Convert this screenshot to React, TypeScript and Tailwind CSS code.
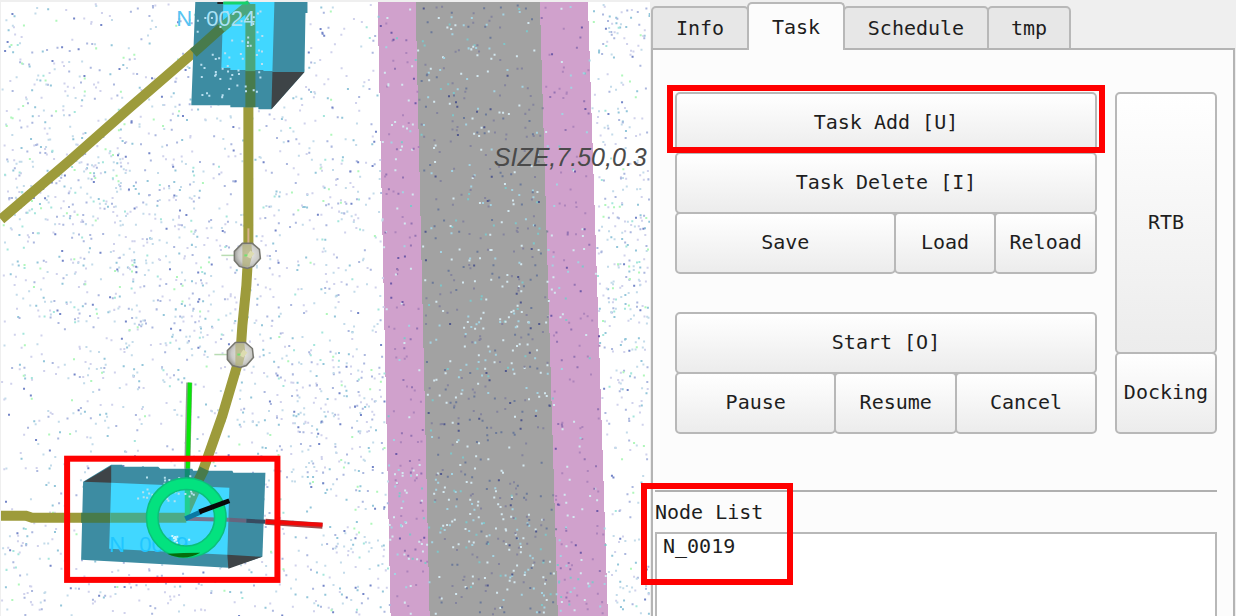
import { useState, type ReactNode } from "react";

/* ---------- point cloud ---------- */

function makeRandom(seed: number) {
  let s = seed;
  return () => {
    s = (s + 0x6d2b79f5) | 0;
    let t = Math.imul(s ^ (s >>> 15), 1 | s);
    t = (t + Math.imul(t ^ (t >>> 7), 61 | t)) ^ t;
    return ((t ^ (t >>> 14)) >>> 0) / 4294967296;
  };
}

type Layer = { color: string; share: number };

const FLOOR: Layer[] = [
  { color: "#d0d2ec", share: 0.28 },
  { color: "#c3dbea", share: 0.25 },
  { color: "#acb8df", share: 0.18 },
  { color: "#93c6da", share: 0.13 },
  { color: "#7486c8", share: 0.06 },
  { color: "#a5e6dc", share: 0.05 },
  { color: "#b0f7bb", share: 0.05 },
];
const LANE_DARK: Layer[] = [
  { color: "#84849d", share: 0.5 },
  { color: "#6c7a99", share: 0.35 },
  { color: "#50588c", share: 0.15 },
];
const SHOULDER_DARK: Layer[] = [
  { color: "#ad84bb", share: 0.5 },
  { color: "#9473b2", share: 0.35 },
  { color: "#6f5aa8", share: 0.15 },
];
const LANE_LIGHT: Layer[] = [
  { color: "#d3e8f0", share: 0.5 },
  { color: "#a3d3e2", share: 0.3 },
  { color: "#7fc6c9", share: 0.2 },
];

function lane(x: number, y: number) {
  const t = y / 616;
  if (x < 377 + 13 * t || x > 587 + 20 * t) return "floor";
  if (x < 415 + 14 * t || x > 539 + 18 * t) return "shoulder";
  return "lane";
}

const hits = (x: number, y: number, spots: number[][]) =>
  spots.reduce((sum, [cx, cy, r, w]) => {
    const d = ((x - cx) ** 2 + (y - cy) ** 2) / (r * r);
    return sum + w * Math.exp(-d);
  }, 0);

const FLOOR_SPOTS = [
  [30, 150, 70, 0.6],
  [150, 250, 90, 0.6],
  [90, 170, 60, 0.3],
  [170, 330, 50, 0.4],
  [320, 420, 55, 0.8],
  [350, 200, 50, 0.4],
  [370, 560, 40, 0.5],
  [640, 230, 60, 1],
  [630, 20, 40, 0.6],
  [630, 340, 60, 0.5],
  [640, 600, 40, 0.9],
  [150, 600, 60, 0.3],
];
const LIGHT_SPOTS = [
  [460, 50, 60, 0.6],
  [510, 220, 60, 0.7],
  [510, 330, 50, 0.8],
  [400, 130, 30, 0.6],
  [400, 510, 60, 1],
  [490, 530, 50, 0.9],
  [560, 590, 50, 1],
  [440, 360, 50, 0.4],
];

function buildCloud() {
  const rand = makeRandom(19);
  const paths = new Map<string, string>();
  const put = (x: number, y: number, set: Layer[]) => {
    let pick = rand();
    let color = set[0].color;
    for (const layer of set) {
      color = layer.color;
      pick -= layer.share;
      if (pick < 0) break;
    }
    const d = `M${x.toFixed(1)} ${y.toFixed(1)}h2v2h-2z`;
    paths.set(color, (paths.get(color) ?? "") + d);
  };
  for (let i = 0; i < 13500; i++) {
    const x = 1 + rand() * 647;
    const y = 3 + rand() * 611;
    const zone = lane(x, y);
    const roll = rand();
    if (zone === "floor") {
      if (roll < 0.21 + 0.48 * hits(x, y, FLOOR_SPOTS)) put(x, y, FLOOR);
    } else if (roll < 0.12) {
      put(x, y, zone === "lane" ? LANE_DARK : SHOULDER_DARK);
    } else if (roll > 0.98 - 0.3 * hits(x, y, LIGHT_SPOTS)) {
      put(x, y, LANE_LIGHT);
    }
  }
  return [...paths.entries()];
}

function sparkle(seed: number, n: number, x: number, y: number, w: number, h: number) {
  const rand = makeRandom(seed);
  let d = "";
  for (let i = 0; i < n; i++) {
    d += `M${(x + rand() * w).toFixed(1)} ${(y + rand() * h).toFixed(1)}h2v2h-2z`;
  }
  return d;
}

const CLOUD = buildCloud();
const UPPER_SPARKLE = sparkle(4, 60, 196, 10, 66, 86);
const LOWER_SPARKLE = sparkle(9, 40, 134, 474, 60, 26);
const LABEL_SPARKLE = sparkle(12, 20, 168, 534, 20, 16);

function Waypoint({ x, y }: { x: number; y: number }) {
  return (
    <g>
      <path d={`M${x - 26} ${y}h26`} stroke="#b9dcb4" strokeWidth="1.5" />
      <path
        d={`M${x - 5} ${y - 12}h10l7 6l1 9l-7 8l-6 2l-8-2l-5-6v-9z`}
        fill="url(#ball)"
        stroke="#77776f"
        strokeWidth="1.5"
      />
      <path d={`M${x - 5} ${y - 11}h9l1 10l-3 12h-7z`} fill="#b0af76" opacity="0.7" />
      <path d={`M${x + 3} ${y - 5}l4 3l-4 5l-4-2z`} fill="#dddcb0" />
      <path d={`M${x - 3} ${y}h3`} stroke="#6fe26f" strokeWidth="2" />
    </g>
  );
}

function MapScene() {
  return (
    <svg
      className="block h-full w-full"
      viewBox="0 0 650 616"
      preserveAspectRatio="xMinYMin slice"
      role="img"
      aria-label="Map view"
    >
      <defs>
        <radialGradient id="ball" cx="0.55" cy="0.45" r="0.6">
          <stop offset="0" stopColor="#ecece8" />
          <stop offset="0.65" stopColor="#cacac6" />
          <stop offset="1" stopColor="#92928e" />
        </radialGradient>
      </defs>
      <rect width="650" height="616" fill="#efefef" />
      <rect x="1" y="2" width="648" height="614" fill="#fff" />

      <g shapeRendering="crispEdges">
        <path d="M377 2H587L607 616H390Z" fill="#d0a1cc" />
        <path d="M415 2H539L557 616H429Z" fill="#a2a2a2" />
      </g>

      {CLOUD.map(([color, d]) => (
        <path key={color} d={d} fill={color} />
      ))}

      <g fill="none" stroke="#9d9b3b" strokeWidth="10">
        <path d="M1 219L70 160L130 107L195 51" />
        <path d="M248 100L248 250L246 285L242 325L240 354L222 415L204 466L198 482" />
        <path d="M1 515H26L32 517H90" />
      </g>

      {/* upper station */}
      <path d="M195 2H307V13H305L304 72L271 109H258V107H230V105H191L193 53Z" fill="#3d8ca2" />
      <path d="M223 2H274L272 71H263V70H230V68H221Z" fill="#41d7ff" />
      <path d="M272 72H304L271 109Z" fill="#3e4447" />
      <path d="M193 53L222 27" stroke="#487b4b" strokeWidth="10" />
      <path d="M221 28L250 4" stroke="#4ba67d" strokeWidth="10" />
      <path d="M250 4V71" stroke="#4ba67d" strokeWidth="10" />
      <path d="M250 71V107" stroke="#487b4b" strokeWidth="10" />
      <path d="M217 3H223" stroke="#222" strokeWidth="2" />
      <path d="M223 3H248" stroke="#16d36b" strokeWidth="3" />
      <path d={UPPER_SPARKLE} fill="#b9dff0" />
      <text x="176" y="26" fontSize="22" fontFamily="'Liberation Sans', sans-serif" fill="#58c4f2">
        N
        <tspan x="206" fill="#a9e2f6">
          0024
        </tspan>
      </text>

      <path d="M248 228V252" stroke="#d6b18d" strokeWidth="2" />
      <Waypoint x={247} y={255} />
      <Waypoint x={240} y={354} />

      {/* lower station */}
      <path d="M189 382L187 468" stroke="#8f9f8f" strokeWidth="6" />
      <path d="M189.500 382L187.500 468" stroke="#08e808" strokeWidth="4" />
      <path d="M111 464H122L123 466H158L160 468H192L193 470H232L233 472H265L262 556L228 567L81 559L83 481Z" fill="#3d8ca2" />
      <path d="M84 481L111 465V482Z" fill="#3e4447" />
      <path d="M227 554L262 556L228 568Z" fill="#3e4447" />
      <path d="M111 482L229 487L227 554L109 548Z" fill="#41d7ff" />
      <path d="M81 517H110" stroke="#487b4b" strokeWidth="10" />
      <path d="M110 517H186" stroke="#4cab87" strokeWidth="10" />
      <path d="M204 468L196 484" stroke="#487b4b" strokeWidth="10" />
      <path d="M188 490H200L188 517Z" fill="#4cab87" />
      <path d="M187 468V486" stroke="#118b72" strokeWidth="5" />
      <path d="M187 486V517" stroke="#20cf91" strokeWidth="5" />
      <path d={LOWER_SPARKLE} fill="#b5e2ee" />
      <text x="109" y="551" fontSize="22" fontFamily="'Liberation Sans', sans-serif" fill="#20c6ff">
        N
        <tspan x="139">0019</tspan>
      </text>
      <path d={LABEL_SPARKLE} fill="#c9f5ff" />
      <path d="M186 518L229 519" stroke="#75758f" strokeWidth="4" />
      <path d="M229 519L246 520" stroke="#67657e" strokeWidth="4" />
      <path d="M246 520L265 521" stroke="#374b60" strokeWidth="4" />
      <path d="M265 521L322 525" stroke="#a04a4a" strokeWidth="6" />
      <path d="M265 521L322 524" stroke="#f00808" strokeWidth="4" />
      <circle cx="186" cy="517" r="34" fill="none" stroke="#0cbf7b" strokeWidth="13" />
      <circle cx="186" cy="517" r="34" fill="none" stroke="#03e27f" strokeWidth="10" />
      <path d="M167 553Q183 552 200 552Q184 561 167 553Z" fill="#066d0b" />
      <path d="M185 518L201 511" stroke="#0b78a3" strokeWidth="5" />
      <path d="M199 511L229 500" stroke="#080808" strokeWidth="5" />

      <text
        x="493"
        y="166"
        fontSize="25"
        fontStyle="italic"
        fontFamily="'Liberation Sans', sans-serif"
        fill="#4a4a4a"
      >
        SIZE,7.50,0.3
      </text>
      <rect x="649" width="1" height="616" fill="#efefef" />
      <rect x="67" y="458" width="210" height="121" fill="none" stroke="#f00" strokeWidth="6" />
    </svg>
  );
}

/* ---------- control panel ---------- */

function PushButton({ className, children }: { className: string; children: ReactNode }) {
  return (
    <button
      type="button"
      className={`min-w-0 rounded-[5px] border-2 border-[#b8b8b8] bg-linear-to-b from-white to-[#ececec] pb-0.5 text-center whitespace-nowrap ${className}`}
    >
      {children}
    </button>
  );
}

const TABS = [
  { name: "Info", width: "w-[98px]" },
  { name: "Task", width: "w-[98px]" },
  { name: "Schedule", width: "w-[146px]" },
  { name: "tmp", width: "w-[84px]" },
];

function TaskPage() {
  return (
    <>
      <div className="flex gap-[18px] pt-[42px] pl-5">
        <div className="flex min-w-0 flex-1 flex-col">
          <div className="relative flex">
            <PushButton className="h-[62px] flex-1">Task Add [U]</PushButton>
            <div className="pointer-events-none absolute -inset-x-2 -top-[7px] bottom-px z-10 border-6 border-[#ff0000]" />
          </div>
          <PushButton className="-mt-0.5 h-[62px]">Task Delete [I]</PushButton>
          <div className="-mt-0.5 flex">
            <PushButton className="h-[62px] flex-[224]">Save</PushButton>
            <PushButton className="-ml-0.5 h-[62px] flex-[102]">Load</PushButton>
            <PushButton className="-ml-0.5 h-[62px] flex-[102]">Reload</PushButton>
          </div>
          <PushButton className="mt-[38px] h-[62px]">Start [O]</PushButton>
          <div className="-mt-0.5 flex">
            <PushButton className="h-[62px] flex-[162]">Pause</PushButton>
            <PushButton className="-ml-0.5 h-[62px] flex-[122]">Resume</PushButton>
            <PushButton className="-ml-0.5 h-[62px] flex-[142]">Cancel</PushButton>
          </div>
        </div>
        <div className="flex w-[102px] flex-col">
          <PushButton className="flex-1">RTB</PushButton>
          <PushButton className="-mt-0.5 h-[82px]">Docking</PushButton>
        </div>
      </div>
      <hr className="mt-14 border-t-2 border-[#b0b0b0]" />
      <section className="relative flex flex-1 flex-col">
        <h2 id="node-list" className="h-10 leading-10">
          Node List
        </h2>
        <ul
          aria-labelledby="node-list"
          className="flex-1 border-2 border-b-0 border-[#b8b8b8] bg-white px-1.5 leading-6"
        >
          <li>N_0019</li>
        </ul>
        <div className="pointer-events-none absolute -top-[9px] -left-3.5 h-[102px] w-[152px] border-6 border-[#ff0000]" />
      </section>
    </>
  );
}

export default function App() {
  const [active, setActive] = useState("Task");
  return (
    <div className="grid min-h-screen grid-cols-[651fr_585fr] bg-[#efefef] font-['DejaVu_Sans_Mono',monospace] text-[20px] text-[#1e1e1e]">
      <div className="relative min-w-0 overflow-hidden">
        <div className="absolute inset-0">
          <MapScene />
        </div>
      </div>
      <main className="z-10 flex min-w-0 flex-col pr-px">
        <div role="tablist" className="flex h-[50px] items-end">
          {TABS.map(({ name, width }) => {
            const on = name === active;
            return (
              <button
                key={name}
                type="button"
                role="tab"
                aria-selected={on}
                onClick={() => setActive(name)}
                className={`${width} -mr-0.5 rounded-t-[5px] border-2 border-[#b8b8b8] ${
                  on ? "z-10 h-12 border-b-0 bg-[#fcfcfc]" : "h-11 bg-[#e7e7e7]"
                }`}
              >
                {name}
              </button>
            );
          })}
        </div>
        <div
          role="tabpanel"
          className="-mt-0.5 flex flex-1 flex-col border-2 border-b-0 border-[#b4b4b4] bg-[#fcfcfc] pr-4 pl-0.5"
        >
          <TaskPage />
        </div>
      </main>
    </div>
  );
}
